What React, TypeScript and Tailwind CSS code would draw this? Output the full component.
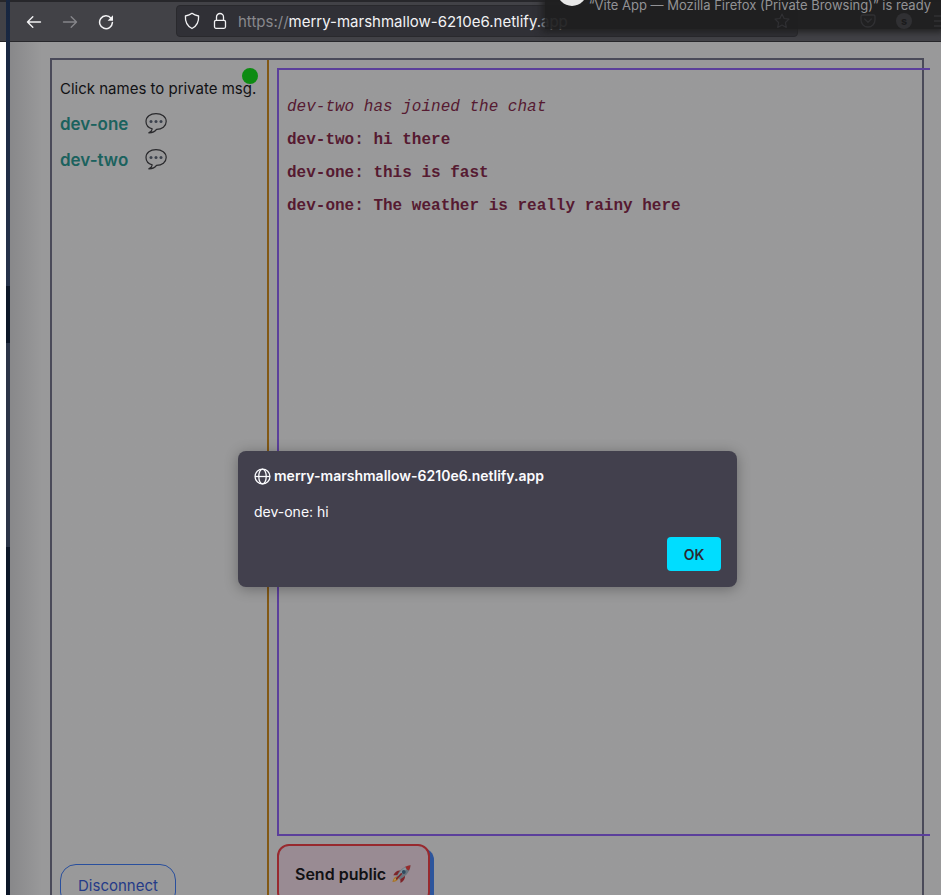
import React from "react";

const people = ["dev-one", "dev-two"];
const messages = [
  "dev-two: hi there",
  "dev-one: this is fast",
  "dev-one: The weather is really rainy here",
];

function BackIcon() {
  return (
    <svg width="16" height="16" viewBox="0 0 16 16" fill="none" stroke="currentColor" strokeWidth="1.4" strokeLinecap="round" strokeLinejoin="round" aria-hidden="true">
      <path d="M14.5 8H1.6M6.8 2.8 1.5 8l5.3 5.2" />
    </svg>
  );
}

function ForwardIcon() {
  return (
    <svg width="16" height="16" viewBox="0 0 16 16" fill="none" stroke="currentColor" strokeWidth="1.4" strokeLinecap="round" strokeLinejoin="round" aria-hidden="true">
      <path d="M1.5 8h12.9M9.2 2.8 14.5 8l-5.3 5.2" />
    </svg>
  );
}

function ReloadIcon() {
  return (
    <svg width="16" height="16" viewBox="0 0 16 16" fill="none" aria-hidden="true">
      <path d="M13 4.2A6.4 6.4 0 1 0 14.4 8.600" stroke="currentColor" strokeWidth="1.5" strokeLinecap="round" />
      <path d="M15 1.300v4.900a.5.5 0 0 1-.5.5H9.600z" fill="currentColor" />
    </svg>
  );
}

function ShieldIcon() {
  return (
    <svg width="16" height="18" viewBox="0 0 16 18" fill="none" stroke="currentColor" strokeWidth="1.3" strokeLinejoin="round" aria-hidden="true">
      <path d="M8 1.300c2 1.600 4.300 2.300 6.600 2.700.3 5.200-1.200 9.800-6.600 12.500C2.600 13.800 1.100 9.200 1.400 4 3.700 3.600 6 2.900 8 1.300z" />
    </svg>
  );
}

function LockIcon() {
  return (
    <svg width="14" height="18" viewBox="0 0 14 18" fill="none" stroke="currentColor" strokeWidth="1.3" aria-hidden="true">
      <rect x="1.500" y="8.300" width="11" height="8" rx="1.500" />
      <path d="M3.500 8.300V5a3.500 3.500 0 0 1 7 0v3.300" />
    </svg>
  );
}

function GlobeIcon() {
  return (
    <svg width="17" height="17" viewBox="0 0 16 16" fill="none" stroke="currentColor" strokeWidth="1.2" aria-hidden="true">
      <circle cx="8" cy="8" r="7" />
      <ellipse cx="8" cy="8" rx="3.500" ry="7" />
      <path d="M1 8h14" />
    </svg>
  );
}

function StarIcon() {
  return (
    <svg width="16" height="16" viewBox="0 0 16 16" fill="none" stroke="currentColor" strokeWidth="1.2" strokeLinejoin="round" aria-hidden="true">
      <path d="m8 1 2.100 4.500 4.900.6-3.600 3.400.9 4.900L8 12l-4.300 2.400.9-4.900L1 6.100l4.900-.6z" />
    </svg>
  );
}

function PocketIcon() {
  return (
    <svg width="16" height="16" viewBox="0 0 16 16" fill="none" stroke="currentColor" strokeWidth="1.3" strokeLinecap="round" strokeLinejoin="round" aria-hidden="true">
      <path d="M2.500 2h11A1.500 1.500 0 0 1 15 3.500V7A7 7 0 0 1 1 7V3.500A1.500 1.500 0 0 1 2.500 2zM4.700 6 8 9.200 11.300 6" />
    </svg>
  );
}

function SpeechIcon() {
  return (
    <svg width="22" height="22" viewBox="0 0 22 22" fill="none" aria-hidden="true">
      <path d="M7.200 16.900C3.500 15.900 1 13.300 1 9.600c0-4.800 4.300-8 10-8s10.200 3.200 10.200 7.900c0 4.600-4.200 7.900-9.700 7.900-1.200 2-3.700 3.300-7.700 3.400 2-.9 3.200-2.200 3.400-3.900z" stroke="#29292c" strokeWidth="1.200" strokeLinejoin="round" />
      <g fill="#3c424d">
        <circle cx="6" cy="9.500" r="1.500" />
        <circle cx="11" cy="9.500" r="1.500" />
        <circle cx="16" cy="9.500" r="1.500" />
      </g>
    </svg>
  );
}

function RocketIcon() {
  return (
    <svg width="20" height="20" viewBox="0 0 20 20" aria-hidden="true">
      <path d="M4.600 12.500c-2.300.4-3.500 2.500-4.200 5.600 2.900-.3 5.500-1.500 6.300-3.800z" fill="#a8752b" />
      <path d="M4.300 13.600c-1.300.4-2 1.600-2.300 3 1.300-.3 2.500-.9 3.100-2z" fill="#b8a160" />
      <path d="M8.500 6.500C5.300 6.200 3 7.800 1.300 11.200l4.600.1zM13 11.500c.3 3.200-1.200 5.800-4.500 7.600L8.200 14z" fill="#7e2429" />
      <path d="M4.500 12.500C6.600 7.500 10.500 2.500 18.500 1.200 18 8.500 12.700 13 7.500 15.500z" fill="#69747d" />
      <path d="M8 8c2-2.700 5-5.200 8-6.200l-1.500 3.400L7.200 13l-2-1z" fill="#87939b" />
      <path d="M13.300 2.700c1.600-.8 3.300-1.300 5.200-1.500-.1 1.900-.6 3.700-1.500 5.300-1.900-.6-3.100-1.900-3.700-3.800z" fill="#972b2b" />
      <circle cx="11.800" cy="8" r="1.900" fill="#304b60" />
      <path d="m4.500 14.900 4.800-5" stroke="#7e2429" strokeWidth="1.600" strokeLinecap="round" />
    </svg>
  );
}

function Toolbar() {
  return (
    <header className="flex h-[42px] shrink-0 items-center border-t-2 border-b border-[#27272b] bg-[#424247] pb-px text-[#f2f2f4]">
      <nav className="flex w-[166px] shrink-0 items-center gap-5 pt-0.5 pl-4" aria-label="History">
        <button type="button" aria-label="Back"><BackIcon /></button>
        <button type="button" aria-label="Forward" className="text-[#85858a]"><ForwardIcon /></button>
        <button type="button" aria-label="Reload"><ReloadIcon /></button>
      </nav>
      <div className="flex h-8 min-w-0 flex-1 items-center rounded border border-[#29292d] bg-[#303036] pl-[7px] text-[15px]">
        <ShieldIcon />
        <span className="ml-[13px] flex"><LockIcon /></span>
        <span className="ml-[11px] pt-0.5 whitespace-nowrap">
          <span className="text-[#88888d]">https://</span>merry-marshmallow-6210e6.netlify.app
        </span>
      </div>
      <div className="w-[143px] shrink-0" />
    </header>
  );
}

function Notification() {
  return (
    <aside className="absolute top-0 right-0 h-[29px] w-[396px] bg-[#1f1f20]/95 text-[#929295] shadow-[0_0_7px_3px_#202021]">
      <div className="absolute -top-6 left-3 size-[30px] rounded-full bg-[#e8e8e8]" />
      <p className="absolute top-0 right-[10px] text-[13px] leading-[10px] whitespace-nowrap">
        “Vite App — Mozilla Firefox (Private Browsing)” is ready
      </p>
      <div className="absolute top-[13px] right-0 flex items-center text-[#303033]">
        <StarIcon />
        <span className="ml-[70px] flex"><PocketIcon /></span>
        <span className="ml-5 flex size-4 items-center justify-center rounded-full bg-[#303033] text-[11px] leading-none font-bold text-[#1b1b1c]">s</span>
        <svg className="ml-[22px]" width="7" height="16" viewBox="0 0 7 16" stroke="currentColor" strokeWidth="1.500" aria-hidden="true">
          <path d="M0 3h7M0 8h7M0 13h7" />
        </svg>
      </div>
    </aside>
  );
}

function Sidebar() {
  return (
    <section className="relative flex w-[217px] shrink-0 flex-col border-r-2 border-[#825814] px-2">
      <span className="absolute top-2 right-[9px] size-4 rounded-full bg-[#0d8b12]" />
      <p className="mt-[17px] text-[15px] leading-6 whitespace-nowrap text-[#111114]">Click names to private msg.</p>
      <ul className="mt-1">
        {people.map((name) => (
          <li key={name}>
            <button type="button" className="flex h-9 items-center gap-[17px] text-[17px] leading-6 font-semibold text-[#1b625e]">
              <span className="pt-px">{name}</span>
              <SpeechIcon />
            </button>
          </li>
        ))}
      </ul>
      <div className="mt-auto h-[31px]">
        <button type="button" className="h-11 rounded-2xl border border-[#294f9d] px-[17px] text-[15px] text-[#253b88]">Disconnect</button>
      </div>
    </section>
  );
}

function Chat() {
  return (
    <section className="flex min-w-0 flex-1 flex-col pt-2 pl-2">
      <div className="-mr-2 flex-1 border-y-2 border-l-2 border-[#5b3f9b] px-2 pt-[21px] font-['Liberation_Mono',monospace] text-base leading-[33px] text-[#561a31]">
        <p className="italic">dev-two has joined the chat</p>
        {messages.map((message) => (
          <p key={message} className="font-bold">{message}</p>
        ))}
      </div>
      <div className="mt-2 h-[51px]">
        <button type="button" className="flex h-[60px] items-center gap-1.5 rounded-xl border-2 border-[#98292e] bg-[#998b93] px-4 text-base font-semibold text-[#111114] shadow-[4px_4px_0_#2d559c]">
          Send public
          <RocketIcon />
        </button>
      </div>
    </section>
  );
}

function AlertDialog() {
  return (
    <div className="absolute inset-x-0 top-[451px] flex justify-center pl-[34px]">
      <div role="alertdialog" aria-labelledby="alert-title" aria-describedby="alert-text" className="w-[499px] rounded-lg bg-[#42404d] p-4 text-[#fbfbfe] shadow-[0_2px_14px_#00000050]">
        <h2 id="alert-title" className="flex items-center gap-[3px] text-[14px] leading-[18px] font-semibold">
          <GlobeIcon />
          merry-marshmallow-6210e6.netlify.app
        </h2>
        <p id="alert-text" className="mt-[18px] text-[14px] leading-[18px]">dev-one: hi</p>
        <div className="mt-4 flex justify-end">
          <button type="button" className="h-[34px] w-[54px] rounded bg-[#00ddff] text-[14px] font-semibold text-[#2b2a33]">OK</button>
        </div>
      </div>
    </div>
  );
}

export default function App() {
  return (
    <div className="relative flex h-screen overflow-hidden bg-[#99999a] font-[Inter,sans-serif]">
      <div className="w-1.5 shrink-0 bg-white">
        <div className="h-[42px] border-t-2 border-b border-[#27272b] bg-[#424247]" />
      </div>
      <div className="flex w-1 shrink-0 flex-col bg-[#2b3447]">
        <div className="h-[286px] bg-linear-to-b from-[#172640] to-[#26324a]" />
        <div className="h-[57px] bg-[#0d1728]" />
        <div className="h-[204px]" />
        <div className="flex-1 bg-[#0d1728]" />
      </div>
      <div className="flex min-w-0 flex-1 flex-col">
        <Toolbar />
        <main className="flex min-h-0 flex-1 bg-linear-to-r from-[#88888a] to-[#99999a] to-[32px] pt-4 pr-[17px] pl-10">
          <div className="flex min-w-0 flex-1 border-x-2 border-t-2 border-[#4a4a59]">
            <Sidebar />
            <Chat />
          </div>
        </main>
      </div>
      <Notification />
      <AlertDialog />
    </div>
  );
}
